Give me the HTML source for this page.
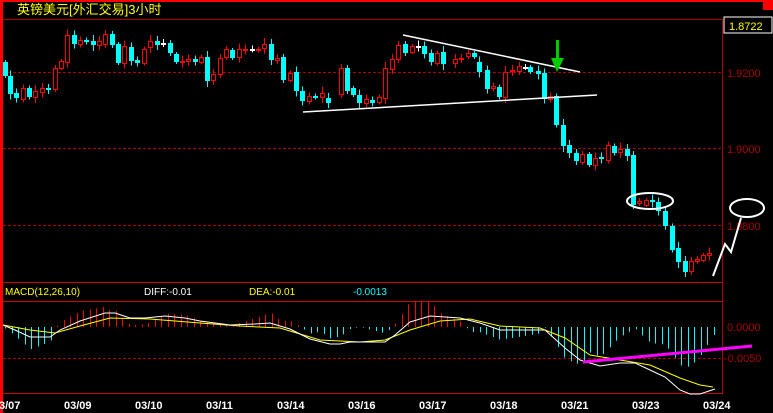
<!DOCTYPE html><html><head><meta charset="utf-8"><style>
html,body{margin:0;padding:0;background:#000;width:773px;height:413px;overflow:hidden}
svg{display:block}
text{font-family:"Liberation Sans","Noto Sans CJK SC",sans-serif}
</style></head><body>
<svg id="s" width="773" height="413" viewBox="0 0 773 413" xmlns="http://www.w3.org/2000/svg">
<rect x="0" y="0" width="773" height="413" fill="#000"/>
<rect x="0" y="0" width="773" height="2" fill="#f00"/>
<rect x="0" y="0" width="3" height="413" fill="#f00"/>
<rect x="763" y="0" width="10" height="10" fill="#f00"/>
<text x="17" y="14" fill="#ff0" font-size="13" font-family="Noto Sans CJK SC,sans-serif">英镑美元[外汇交易]3小时</text>
<line x1="3" y1="19.5" x2="723" y2="19.5" stroke="#a00" stroke-width="1"/>
<line x1="722.5" y1="19" x2="722.5" y2="394" stroke="#a00"/>
<rect x="724" y="17" width="48" height="16" fill="none" stroke="#fff"/>
<text x="729" y="30" fill="#ff0" font-size="11">1.8722</text>
<g stroke="#a00" stroke-dasharray="3,2"><line x1="3" y1="72.5" x2="722" y2="72.5"/><line x1="3" y1="148.5" x2="722" y2="148.5"/><line x1="3" y1="225.5" x2="722" y2="225.5"/><line x1="3" y1="358.5" x2="722" y2="358.5"/></g>
<g fill="#a00" font-size="11"><text x="727" y="77">1.9200</text><text x="727" y="153">1.9000</text><text x="727" y="230">1.8800</text><text x="727" y="331">0.0000</text><text x="724" y="362">-0.0050</text></g>
<line x1="3" y1="282.5" x2="723" y2="282.5" stroke="#c00"/>
<line x1="3" y1="301.5" x2="723" y2="301.5" stroke="#c00"/>
<line x1="3" y1="393.5" x2="723" y2="393.5" stroke="#c00"/>
<g font-size="10"><text x="5" y="295" fill="#ff0">MACD(12,26,10)</text><text x="144" y="295" fill="#fff">DIFF:-0.01</text><text x="249" y="295" fill="#ff0">DEA:-0.01</text><text x="353" y="295" fill="#0ff">-0.0013</text></g>
<g fill="#fff" font-size="11" font-weight="bold" font-family="Liberation Mono,monospace"><text x="-1" y="409">3/07</text><text x="64" y="409">03/09</text><text x="135" y="409">03/10</text><text x="206" y="409">03/11</text><text x="277" y="409">03/14</text><text x="348" y="409">03/16</text><text x="419" y="409">03/17</text><text x="490" y="409">03/18</text><text x="561" y="409">03/21</text><text x="632" y="409">03/23</text><text x="703" y="409">03/24</text></g>
<g id="c"></g>
<g fill="none" stroke="#fff" stroke-width="1.5">
<polyline points="303,112 390,107 597,95"/>
<line x1="403" y1="35" x2="580" y2="72"/>
</g>
<g fill="none" stroke="#fff" stroke-width="2">
<ellipse cx="650" cy="201" rx="23" ry="8"/>
<ellipse cx="747" cy="208" rx="17" ry="9"/>
<polyline points="713,276 725,244 731,252 741,218"/>
</g>
<g fill="#0c0"><rect x="556" y="40" width="3" height="20"/><polygon points="551,58 564,58 557,72"/></g>
<g id="m"></g>
<line x1="583" y1="362" x2="752" y2="346" stroke="#f0f" stroke-width="3"/>
</svg>
<script>
var NS="http://www.w3.org/2000/svg",c=document.getElementById('c'),m=document.getElementById('m');
function el(p,t,a){var e=document.createElementNS(NS,t);for(var k in a)e.setAttribute(k,a[k]);p.appendChild(e);return e;}
var d=[[5,'c',62,76],[10,'c',76,94],[16,'c',93,98],[23,'r',88,99],[29,'c',88,97],[35,'r',91,97],[42,'r',88,92],[48,'c',88,90],[55,'r',68,89],[61,'r',61,68],[67,'r',35,62],[74,'c',35,44],[80,'r',40,44],[86,'c',40,42],[93,'c',41,45],[99,'r',41,45],[105,'r',34,44],[112,'c',34,45],[118,'c',44,63],[124,'r',46,63],[131,'c',47,61],[137,'c',60,63],[144,'r',49,63],[150,'r',41,47],[157,'c',41,45],[163,'w',43,43],[170,'c',43,53],[176,'c',54,62],[182,'r',61,62],[188,'r',59,61],[195,'c',59,62],[201,'r',57,62],[207,'c',57,81],[213,'r',74,80],[220,'r',58,74],[226,'r',49,57],[232,'c',50,58],[239,'r',49,57],[245,'r',49,50],[252,'w',49,49],[258,'r',49,50],[264,'r',44,48],[271,'c',44,60],[277,'r',58,60],[283,'c',57,80],[290,'r',73,80],[296,'c',72,91],[302,'c',91,101],[309,'r',96,101],[315,'c',96,97],[322,'r',93,97],[328,'c',98,103],[341,'r',68,94],[347,'c',68,91],[353,'c',88,95],[359,'c',95,103],[366,'r',99,103],[372,'c',100,103],[379,'r',97,102],[385,'r',68,98],[392,'r',59,69],[398,'r',45,59],[405,'c',44,53],[412,'r',46,52],[418,'w',46,46],[424,'c',46,54],[431,'c',53,62],[437,'r',53,63],[443,'c',52,64],[455,'r',59,63],[461,'r',58,59],[468,'r',53,56],[474,'c',53,57],[479,'c',62,72],[487,'c',70,89],[493,'r',86,88],[499,'c',87,97],[505,'r',72,97],[512,'r',70,71],[519,'r',66,71],[525,'w',67,67],[530,'c',67,72],[538,'c',71,74],[544,'c',73,99],[550,'r',96,99],[556,'c',96,125],[563,'c',125,146],[569,'c',145,153],[576,'c',153,161],[582,'r',154,162],[589,'c',154,165],[595,'r',158,165],[601,'c',157,159],[608,'r',145,160],[614,'c',146,153],[620,'r',149,152],[627,'c',149,156],[633,'c',155,205],[639,'r',201,203],[646,'r',200,205],[652,'c',200,202],[658,'c',202,211],[665,'c',211,226],[672,'c',226,250],[678,'c',248,262],[685,'c',261,272],[691,'r',261,271],[697,'r',259,261],[703,'r',255,260],[709,'r',253,255]];
d.forEach(function(k,i){var x=k[0],col=k[1]=='c'?'#0ff':k[1]=='r'?'#f00':'#fff',t=k[2],b=k[3];var w=4+((i*7)%9);
el(c,'line',{x1:x+.5,x2:x+.5,y1:t-w/2,y2:b+w/2,stroke:col});
if(k[1]=='r')el(c,'rect',{x:x-1.5,y:t+.5,width:4,height:Math.max(b-t,1),fill:'#000',stroke:col});
else el(c,'rect',{x:x-2,y:t,width:5,height:Math.max(b-t,2),fill:col});});
var W=[[3,325],[15,330],[30,337],[50,337],[60,330],[80,321],[105,313],[115,313],[130,318],[145,318],[165,316],[185,318],[200,321],[230,325],[255,324],[270,323],[290,329],[310,339],[330,344],[340,344],[350,342],[385,342],[395,335],[410,322],[430,316],[460,318],[480,323],[500,330],[545,330],[565,348],[580,360],[600,366],[620,363],[635,363],[650,370],[665,377],[680,390],[690,394],[700,394],[715,389]];
var Y=[[3,325],[30,330],[55,333],[80,326],[110,318],[150,319],[200,323],[240,326],[280,328],[320,340],[360,342],[385,340],[410,330],[440,321],[470,319],[500,326],[540,328],[565,338],[590,355],[620,360],[650,365],[680,378],[700,385],[713,387]];
function f(a,x){for(var i=1;i<a.length;i++)if(x<=a[i][0]){var p=a[i-1],q=a[i];return p[1]+(q[1]-p[1])*(x-p[0])/(q[0]-p[0]);}return a[a.length-1][1];}
for(var x=5;x<716;x+=6.5){var h=(f(W,x)-f(Y,x))*3.2;var xx=Math.round(x)+.5;el(m,'line',{x1:xx,x2:xx,y1:327,y2:327+h,stroke:h<0?'#f00':'#0ff'});}
el(m,'polyline',{points:Y.join(' '),fill:'none',stroke:'#ff0'});
el(m,'polyline',{points:W.join(' '),fill:'none',stroke:'#fff'});
</script>
</body></html>
